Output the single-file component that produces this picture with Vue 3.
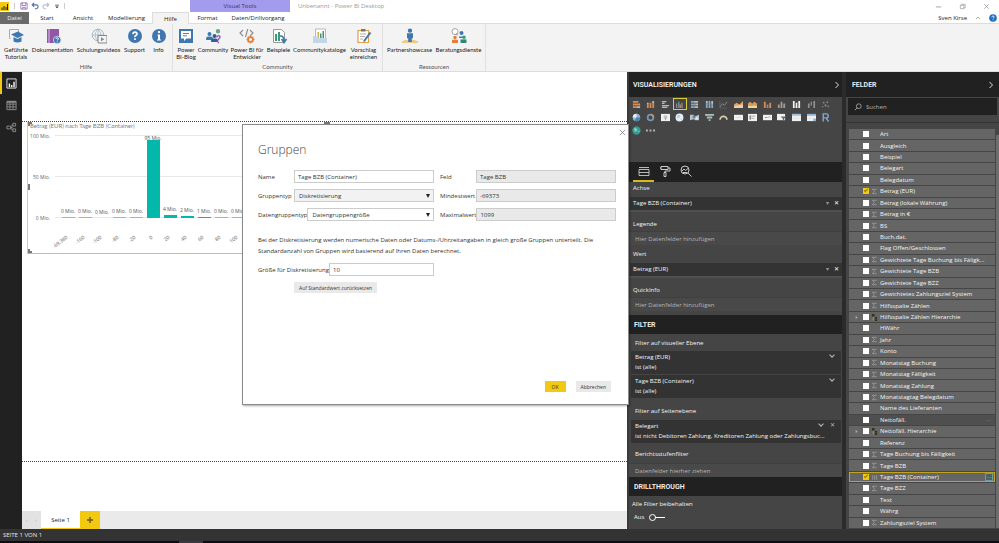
<script setup>
import { h, ref } from 'vue'

// Small multi-path icon: each part is [path data, fill, stroke, stroke width].
const Glyph = (props) =>
  h(
    'svg',
    { viewBox: `0 0 ${props.box} ${props.box}`, 'aria-hidden': 'true' },
    props.parts.map(([d, fill, stroke, width]) =>
      h('path', { d, fill: fill || 'none', stroke: stroke || 'none', 'stroke-width': width || 1 })
    )
  )
Glyph.props = ['parts', 'box']

const disc = (x, y, r) => `M${x - r} ${y}a${r} ${r} 0 1 0 ${2 * r} 0a${r} ${r} 0 1 0 ${-2 * r} 0z`
const person = (x, y, c) => [
  [disc(x, y, 2), c],
  [`M${x - 3.4} ${y + 6}v-1.6q0-2 2-2h2.8q2 0 2 2v1.6z`, c],
]

const blue = '#3f78b0'
const orange = '#e2803a'
const purple = '#9457a8'
const qMark = (x, y) => `M${x - 2} ${y - 1.4}q.1-2 2-2t2 1.8q0 1-1.200 1.700t-.8 1.500M${x} ${y + 2.8}v1.6`

const groups = [
  {
    name: 'Hilfe',
    cls: 'g-help',
    items: [
      {
        label: 'Geführte Tutorials',
        icon: [
          ['M2.5 10.5h-1v-9h9v3', '', '#aaa'],
          ['M3 6.500 10 3.500 16 7 9.500 10z', blue],
          ['M5.500 9v4.500q4 2 8 0V9l-4 2z', blue],
        ],
      },
      {
        label: 'Dokumentation',
        icon: [
          ['M2 1h12v14H2z', purple],
          ['M4 1v14', '', '#d8bde0', 1],
          [disc(12.2, 12, 3.8), blue, '#fff', 0.6],
          ['M11 11q0-1.300 1.200-1.300t1.200 1.100-1.200 1.500M12.200 13.400v1', '', '#fff', 0.9],
        ],
      },
      {
        label: 'Schulungsvideos',
        icon: [
          [disc(7, 7, 5.8), '', '#9fb0bd', 0.9],
          ['M1.200 7h11.600M7 1.200v11.600M7 1.200q-6 5.800 0 11.600M7 1.200q6 5.800 0 11.600', '', '#9fb0bd', 0.7],
          ['M7 7.500h9v7.500H7z', '#f3f3f3', '#888', 1],
          ['M10 9.200v4l3.400-2z', '#888'],
        ],
      },
      { label: 'Support', icon: [[disc(8, 8, 7), blue], [qMark(8, 7.5), '', '#fff', 1.7]] },
      { label: 'Info', icon: [[disc(8, 8, 7), blue], ['M7 3h2v2H7zM6.500 6.500H9v5h1v1H6v-1h1v-4h-.5z', '#fff']] },
    ],
  },
  {
    name: 'Community',
    cls: 'g-comm',
    items: [
      {
        label: 'Power BI-Blog',
        icon: [
          ['M1 1h14v14H1z', blue],
          ['M3 3h10v7.500H8.500L6 13v-2.500H3z', '#fff'],
          ['M5 5.500h6M5 7.800h4', '', blue, 0.9],
        ],
      },
      {
        label: 'Community',
        icon: [
          ...person(4.5, 6, blue),
          ...person(9.5, 8, '#2f5f93'),
          [disc(13, 3.2, 2.2), '#6aa58c'],
          ['M11.800 9.500q0-1.800 1.600-1.800T15 9.200q0 1-1.600 2v1.200M13.400 13.800v1.400', '', purple, 1.4],
        ],
      },
      {
        label: 'Power BI für Entwickler',
        icon: [
          ['M4 2 1 5l3 3M11 2l3 3-3 3M8.800 1 6.500 9', '', '#8b8b8b', 1.1],
          [disc(11.5, 11.5, 2.4), '', orange, 1.7],
          ['M11.500 7.600v1.500M11.500 14v1.500M7.600 11.500h1.500M14 11.500h1.500M8.700 8.700l1 1M13.300 13.300l1 1M14.300 8.700l-1 1M9.700 13.300l-1 1', '', orange, 1.3],
        ],
      },
      {
        label: 'Beispiele',
        icon: [
          ['M2.500 1.500h8l3 3v10h-11z', '#fff', '#9a9a9a', 1],
          ['M4 6h2v7H4z', '#3c9b74'],
          ['M7 4h2v9H7z', '#3c9b74'],
          ['M9 8q4-.5 4 5M10.500 11l2.500 3.500L15.500 11', '', blue, 1.6],
        ],
      },
      {
        label: 'Communitykataloge',
        icon: [
          ['M3.500 1h10v10h-10z', '#fff', '#a9a9a9', 0.8],
          ['M5.500 4h1.500v6H5.500z', '#c9b44a'],
          ['M8 5.500h1.500V10H8z', '#3c9b74'],
          ['M10.500 3H12v7h-1.500z', '#4b8f82'],
          ['M1 8q5 0 6 2h8v5H1z', '#c3d6e8'],
        ],
      },
      {
        label: 'Vorschlag einreichen',
        icon: [
          ['M2 2.500h10.500v12H2z', '#fff', '#dba24b', 1.2],
          ['M5 1h4.500v2.500H5z', '#777'],
          ['M4 6h6M4 8.500h5M4 11h3', '', '#999', 0.8],
          ['M14.500 4.500 8.500 12.500', '', blue, 2],
          ['M7.500 14l.3-2.200 1.700 1.200z', '#444'],
        ],
      },
    ],
  },
  {
    name: 'Ressourcen',
    cls: 'g-res',
    items: [
      {
        label: 'Partnershowcase',
        icon: [
          ['M0 13.500q3-2 8-2t8 2v1.500H0z', '#efc98a'],
          [disc(8, 2.6, 2.2), blue],
          ['M5 5.300h6v5H9.800V14H6.200v-3.700H5z', blue],
        ],
      },
      {
        label: 'Beratungsdienste',
        icon: [
          [disc(4, 3.6, 3), '#fff', '#999', 0.9],
          ['M4.500 6 6.500 8V5z', '#999'],
          [disc(10.5, 5, 2), blue],
          ['M8 10V8.500h5V10z', blue],
          [disc(4, 9.6, 1.8), orange],
          ['M1 15v-3.200h6V15z', orange],
          [disc(13, 9.2, 1.8), '#3c9b74'],
          ['M9.500 15v-3.600h6V15z', '#31867c'],
        ],
      },
    ],
  },
]

// Visual gallery glyphs, drawn in a 10 x 10 box.
const o = '#d98a4a'
const g = '#b9b9b9'
const b = '#7fa8c9'
const w = '#f1f1f1'
const visuals = [
  ['Gestapelte Balken', [['M1 1h5v2H1zM1 4h7v2H1zM1 7h4v2H1z', o], ['M6 1h1v2H6zM8 4h1v2H8zM5 7h4v2H5z', g]]],
  ['Gestapelte Säulen', [['M1 5h2v4H1zM4 3h2v6H4zM7 4h2v5H7z', o], ['M1 3h2v2H1zM7 1h2v3H7z', g]]],
  ['Gruppierte Balken', [['M1 1h5v1.500H1zM1 3h3v1.500H1zM1 5.500h8V7H1zM1 7.500h6V9H1z', g]]],
  ['Gruppierte Säulen', [['M1 4h1.500v5H1zM7 3h1.500v6H7z', '#8d8d8d'], ['M3.500 2H5v7H3.500z', '#6f96a8'], ['M5.200 5h1.300v4H5.200z', o]]],
  ['100 % Balken', [['M1 1h3v2H1zM1 4h5v2H1zM1 7h4v2H1z', b], ['M4 1h5v2H4zM6 4h3v2H6zM5 7h4v2H5z', g]]],
  ['100 % Säulen', [['M1 4h2v5H1zM4 2h2v7H4zM7 5h2v4H7z', b], ['M1 1h2v3H1zM4 1h2v1H4zM7 1h2v4H7z', g]]],
  ['Linie', [['M1 8 4 4l2 2 3-4', '', '#8b8b8b', 1], ['M1 1v8h8', '', '#6d6d6d', 0.7]]],
  ['Fläche', [['M0 9V5l3-2 3 2 4-4v8z', '#e6a262'], ['M0 9V7l4-1 6-1v4z', '#e9cfae']]],
  ['Gestapelte Fläche', [['M0 9V4l2-2 3 2 2-2 3 2v5z', '#d79a58'], ['M0 9V6l4 1 3-1 3 1v2z', '#efd7a5']]],
  ['Linie und Säule', [['M1 2h2v7H1zM7 3h2v6H7z', o], ['M4 5h2v4H4z', '#8a8a8a']]],
  ['Linie und gruppierte Säule', [['M1 5h2v4H1zM4 2h2v7H4zM7 4h2v5H7z', '#a29a93']]],
  ['Menüband', [['M1 1h2v8H1zM4 3h2v6H4zM7 1h2v8H7z', w], ['M3 3h1v3H3zM6 4h1v3H6z', '#8b6f5a']]],
  ['Wasserfall', [['M1 4h2v5H1zM4 2h1.500v4H4zM7 1h2v8H7z', '#8d8d8d']]],
  ['Punktdiagramm', [[disc(3, 3, 1) + disc(7, 2.5, 1) + disc(5, 6, 1.2) + disc(8, 7, 1) + disc(2, 7.5, 0.8), '#858585']]],
  ['Kreis', [[disc(5, 5, 4.2), '#8fb6d6'], ['M5 5V.8A4.200 4.200 0 0 0 .8 5z', w], ['M5 5h4.200A4.200 4.200 0 0 1 3 8.700z', '#4f7fae']]],
  ['Ring', [[disc(5, 5, 3.2), '', '#7195bb', 2], ['M5 1.800A3.200 3.200 0 0 1 8.200 5', '', '#c3915f', 2]]],
  ['Treemap', [['M0 1h10v8H0z', w], ['M3 3.500h4M3 5.500h4M5 5.500V8', '', '#777', 0.7]]],
  ['Karte', [[disc(5, 5, 4.4), '#e4eff8'], ['M2.500 2.500 5 2l1 2-2 2-2-1zM6 6l2 0-1 2z', '#b9d2e6']]],
  ['Flächenkartogramm', [['M0 2h4l1 2 5-2v6H6L4 7 0 8z', '#b5c2cf'], ['M3 3h3v3H3z', '#5c82a8'], [disc(7.5, 6, 1.5), '#e2e2e2']]],
  ['Trichter', [['M0 1h10v2H0zM2 4h6v2H2zM4 7h2v2H4z', '#a9c0b4']]],
  ['Messgerät', [['M1.200 7.500a3.800 3.800 0 0 1 7.600 0', '', '#d6ccb0', 1.8]]],
  ['Karte (Zahl)', [['M0 2h10v6H0z', w], ['M2 5h6', '', '#d8d8d8', 0.8]]],
  ['Mehrzeilige Karte', [['M0 1h10v8H0z', w], ['M2 3h1v4H2zM4 3.500h4M4 6h3', '#888', '#888', 0.7]]],
  ['KPI', [['M0 2h10v6H0z', w], ['M2 5h3M6 5l1-1 1 1', '', '#b07070', 0.9]]],
  ['Datenschnitt', [['M0 1h9v7H0z', w], ['M4 4h6L8 6.500V9.500L6.500 8V6.500z', '#5b6b7a']]],
  ['Tabelle', [['M0 1h10v8H0z', w], ['M0 1h10v2H0z', '#9cbcd8'], ['M3.500 3v6M6.500 3v6M0 6h10', '', '#dedede', 0.5]]],
  ['Matrix', [['M0 1h10v8H0z', w], ['M0 1h10v2H0zM7 6h3v3H7z', '#8fb3d3'], ['M3.500 3v6M0 6h10', '', '#dedede', 0.5]]],
  ['R-Skript', [['M2.500 9.500V1h3.500q2 0 2 2.200t-2 2.200H2.500M5.500 5.400 8.500 9.500', '', '#7fa5d4', 1.6]]],
  ['ArcGIS', [[disc(5, 5, 4.6), '#2f9d92'], ['M2 3 4 2l2 2-1 2-2 0zM6 6l2-1 0 2z', '#83cfc6']]],
]

const bars = [
  ['-69.380', '0 Mio.', 1],
  ['-160', '0 Mio.', 1],
  ['-100', '0 Mio.', 0],
  ['-80', '0 Mio.', 1],
  ['-20', '0 Mio.', 1],
  ['0', '95 Mio.', 78],
  ['20', '4 Mio.', 3],
  ['40', '2 Mio.', 2],
  ['60', '1 Mio.', 1],
  ['80', '0 Mio.', 1],
  ['100', '0 Mio.', 1],
]

const s = 'sum'
const fields = ref(
  [
    ['Art'], ['Ausgleich'], ['Beispiel'], ['Belegart'], ['Belegdatum'],
    ['Betrag (EUR)', s, true],
    ['Betrag (lokale Währung)', s], ['Betrag in €', s], ['BS', s],
    ['Buch.dat.'], ['Flag Offen/Geschlossen'],
    ['Gewichtete Tage Buchung bis Fäligk...', s],
    ['Gewichtete Tage BZB', s], ['Gewichtete Tage BZZ', s],
    ['Gewichtetes Zahlungsziel System', s],
    ['Hilfsspalte Zählen', s], ['Hilfsspalte Zählen Hierarchie', 'tree'],
    ['HWähr'], ['Jahr', s], ['Konto', s],
    ['Monatstag Buchung', s], ['Monatstag Fälligkeit', s],
    ['Monatstag Zahlung', s], ['Monatstagtag Belegdatum', s],
    ['Name des Lieferanten'], ['Nettofäll.', 'hover'],
    ['Nettofäll. Hierarchie', 'tree'], ['Referenz'],
    ['Tage Buchung bis Fälligkeit', s], ['Tage BZB', s],
    ['Tage BZB (Container)', 'bin', true], ['Tage BZZ', s],
    ['Text'], ['Währg'], ['Zahlungsziel System', s],
  ].map(([name, kind = '', on = false]) => ({ name, kind, on }))
)

const name = ref('Tage BZB (Container)')
const size = ref('10')
</script>

<template>
  <div class="app">
    <header>
      <div class="titlebar">
        <div class="quick">
          <svg class="logo" viewBox="0 0 9 9" aria-hidden="true"><path d="M0 0h9v9H0z" fill="#f2c811" /><path d="M1.500 5.500h1V8h-1zM3.500 4h1v4h-1zM5.500 5h1v3h-1zM7 2h1v6H7z" fill="#222" /></svg>
          <i class="bar"></i>
          <button aria-label="Speichern"><svg viewBox="0 0 9 9"><path d="M1 1h7v7H1zM2.500 1v3h4V1M3 8V6h3v2" fill="none" stroke="#8a68a8" stroke-width=".9" /></svg></button>
          <button aria-label="Rückgängig"><svg viewBox="0 0 9 9"><path d="M3.500 1 1.300 3.200l2.200 2.200M1.500 3.200H6q2 0 2 2T6 7.500H4.500" fill="none" stroke="#4f6fa8" stroke-width="1.200" /></svg></button>
          <button aria-label="Wiederholen"><svg viewBox="0 0 9 9"><path d="M5.500 1l2.200 2.200-2.200 2.200M7.500 3.200H3q-2 0-2 2t2 2.300h1.500" fill="none" stroke="#b3bfd6" stroke-width="1.200" /></svg></button>
          <button aria-label="Anpassen"><svg viewBox="0 0 9 9"><path d="M2.500 3h4v1h-4zM2.500 5h4l-2 2z" fill="#333" /></svg></button>
          <i class="bar tail"></i>
        </div>
        <div class="context">Visual Tools</div>
        <div class="doc">Unbenannt - Power BI Desktop</div>
        <div class="window">
          <button aria-label="Minimieren"><svg viewBox="0 0 8 8"><path d="M1 4.500h6" fill="none" stroke="#999" /></svg></button>
          <button aria-label="Verkleinern"><svg viewBox="0 0 8 8"><path d="M1.500 2.500h4v4h-4zM3 2.500v-1h4v4H5.500" fill="none" stroke="#999" stroke-width=".8" /></svg></button>
          <button aria-label="Schließen"><svg viewBox="0 0 8 8"><path d="M1.500 1.500l5 5M6.500 1.500l-5 5" fill="none" stroke="#888" stroke-width=".8" /></svg></button>
        </div>
      </div>
      <nav class="tabs">
        <button class="file">Datei</button>
        <button>Start</button>
        <button>Ansicht</button>
        <button>Modellierung</button>
        <button class="active">Hilfe</button>
        <button>Format</button>
        <button>Daten/Drillvorgang</button>
        <div class="user">
          <span>Sven Kirse</span>
          <svg viewBox="0 0 8 8"><path d="M2 5l2-2 2 2" fill="none" stroke="#999" stroke-width=".8" /></svg>
          <svg viewBox="0 0 8 8"><circle cx="4" cy="4" r="3.800" fill="#1f6fc0" /><path d="M2.900 3.200q0-1.300 1.100-1.300t1.100 1-1.100 1.600M4 5.300v.9" fill="none" stroke="#fff" stroke-width=".8" /></svg>
        </div>
      </nav>
      <div class="ribbon">
        <section v-for="grp in groups" :key="grp.name" class="group">
          <div class="items" :class="grp.cls">
            <button v-for="it in grp.items" :key="it.label">
              <Glyph :parts="it.icon" :box="16" class="big" />
              <span>{{ it.label }}</span>
            </button>
          </div>
          <h2>{{ grp.name }}</h2>
        </section>
      </div>
    </header>

    <main>
      <nav class="views">
        <button class="on" aria-label="Bericht"><svg viewBox="0 0 12 12"><path d="M1 1h10v10H1z" fill="none" stroke="#e8e8e8" /><path d="M3 6h1.500v4H3zM5.500 7.500H7V10H5.500zM8 4h1.500v6H8z" fill="#fff" /></svg></button>
        <button aria-label="Daten"><svg viewBox="0 0 12 12"><path d="M1 1.500h10v9H1zM1 4.500h10M1 7.500h10M4.300 2v9M7.700 2v9" fill="none" stroke="#8c8c8c" /><path d="M1 1h10v2H1z" fill="#8c8c8c" /></svg></button>
        <button aria-label="Beziehungen"><svg viewBox="0 0 12 12"><path d="M1 4.500h4v3H1zM7.500 1.500h3v3h-3zM7.500 7.500h3v3h-3zM5 6h1.500M6.500 3v6M6.500 3h1M6.500 9h1" fill="none" stroke="#8c8c8c" /></svg></button>
      </nav>

      <div class="center">
        <div class="canvas">
          <div class="page">
            <figure>
              <figcaption>Betrag (EUR) nach Tage BZB (Container)</figcaption>
              <svg class="chart" viewBox="0 0 600 122" preserveAspectRatio="xMinYMin slice">
                <g stroke="#e9e9e9" stroke-width="1"><path d="M27 5.500H595M27 46.500H595M27 87.500H595" /></g>
                <g class="axis" text-anchor="end">
                  <text x="22" y="8">100 Mio.</text>
                  <text x="22" y="49">50 Mio.</text>
                  <text x="22" y="90">0 Mio.</text>
                </g>
                <g v-for="(bar, i) in bars" :key="bar[0]">
                  <rect :x="34 + i * 17" :y="88 - bar[2]" width="13" :height="bar[2]" fill="#01b8aa" :opacity="bar[1] === '0 Mio.' ? 0.55 : 1" />
                  <text class="val" :x="40 + i * 17" :y="bar[2] > 9 ? 88 - bar[2] : 84 - bar[2]" text-anchor="middle">{{ bar[1] }}</text>
                  <text class="axis" :transform="`translate(${40 + i * 17} 108) rotate(-38)`" text-anchor="end">{{ bar[0] }}</text>
                </g>
              </svg>
              <i class="handle tl"></i><i class="handle ml"></i><i class="handle bl"></i><i class="handle tc"></i>
            </figure>
          </div>
        </div>
        <footer class="pages">
          <div class="arrows"><button aria-label="Vorherige Seite">‹</button><button aria-label="Nächste Seite">›</button></div>
          <button class="sheet">Seite 1</button>
          <button class="add" aria-label="Neue Seite"><svg viewBox="0 0 8 8"><path d="M4 1v6M1 4h6" stroke="#6b5a10" stroke-width="1.400" /></svg></button>
        </footer>
      </div>

      <aside class="viz">
        <h1>VISUALISIERUNGEN <svg viewBox="0 0 8 8"><path d="M2.500 1 5.500 4l-3 3" fill="none" stroke="#ddd" /></svg></h1>
        <div class="gallery">
          <button v-for="(v, i) in visuals" :key="v[0]" :aria-label="v[0]" :class="{ picked: i === 3 }">
            <Glyph :parts="v[1]" :box="10" class="tiny" />
          </button>
          <button class="more" aria-label="Weitere"><svg class="tiny" viewBox="0 0 10 10"><path d="M0 4h2v2H0zM4 4h2v2H4zM8 4h2v2H8z" fill="#bbb" /></svg></button>
        </div>
        <div class="wells-tabs">
          <button class="on" aria-label="Felder"><svg viewBox="0 0 12 12"><path d="M1 2.500h10M1 4.500h10v6H1zM1 7.500h10" fill="none" stroke="#ddd" stroke-width=".8" /></svg></button>
          <button aria-label="Format"><svg viewBox="0 0 12 12"><path d="M2 1.500h7v3H2zM9 3h2v3H6v1.500M5 7.500h2v4H5zM2 3H1" fill="none" stroke="#ddd" stroke-width=".9" /></svg></button>
          <button aria-label="Analyse"><svg viewBox="0 0 12 12"><circle cx="5" cy="5" r="4" fill="none" stroke="#ddd" stroke-width=".9" /><path d="M8 8l3.500 3.500M2 6l2-2 1.500 1.500L8 3.500M3 7.500h4" fill="none" stroke="#ddd" stroke-width=".9" /></svg></button>
        </div>
        <div class="wells">
          <h3>Achse</h3>
          <div class="well">Tage BZB (Container)<span class="acts"><button aria-label="Menü">▾</button><button class="x" aria-label="Entfernen">✕</button></span></div>
          <h3 class="after">Legende</h3>
          <p class="drop">Hier Datenfelder hinzufügen</p>
          <h3 class="mid">Wert</h3>
          <div class="well">Betrag (EUR)<span class="acts"><button aria-label="Menü">▾</button><button class="x" aria-label="Entfernen">✕</button></span></div>
          <h3 class="after">QuickInfo</h3>
          <p class="drop">Hier Datenfelder hinzufügen</p>
        </div>
        <h2>FILTER</h2>
        <div class="filters">
          <h3>Filter auf visueller Ebene</h3>
          <div class="card"><b>Betrag (EUR)</b><span>ist (alle)</span><i class="chev"></i></div>
          <div class="card"><b>Tage BZB (Container)</b><span>ist (alle)</span><i class="chev"></i></div>
          <h3 class="next">Filter auf Seitenebene</h3>
          <div class="card"><b>Belegart</b><span>ist nicht Debitoren Zahlung, Kreditoren Zahlung oder Zahlungsbuc...</span><i class="chev two"></i><button class="cut" aria-label="Filter entfernen">✕</button></div>
          <h3 class="report">Berichtsstufenfilter</h3>
          <p class="drop">Datenfelder hierher ziehen</p>
        </div>
        <h2>DRILLTHROUGH</h2>
        <div class="drill">
          <span>Alle Filter beibehalten</span>
          <label>Aus <input type="checkbox" role="switch" /></label>
        </div>
      </aside>

      <aside class="fields">
        <h1>FELDER <svg viewBox="0 0 8 8"><path d="M2.500 1 5.500 4l-3 3" fill="none" stroke="#ddd" /></svg></h1>
        <div class="search">
          <svg viewBox="0 0 10 10"><circle cx="6" cy="4" r="3" fill="none" stroke="#bbb" stroke-width=".9" /><path d="M4 6 1 9" stroke="#bbb" /></svg>
          <input type="text" placeholder="Suchen" aria-label="Suchen" />
        </div>
        <div class="listwrap">
          <ul>
            <li v-for="f in fields" :key="f.name" :class="f.kind">
              <i class="twist"><svg v-if="f.kind === 'tree'" viewBox="0 0 6 6"><path d="M2 1l2.500 2L2 5z" fill="#aaa" /></svg></i>
              <label>
                <input v-model="f.on" type="checkbox" />
                <svg class="kind" viewBox="0 0 8 8">
                  <path v-if="f.kind === 'sum'" d="M6.500 1.500h-5L4 4 1.500 6.500h5" fill="none" stroke="#a0a0a0" stroke-width=".9" />
                  <path v-else-if="f.kind === 'bin'" d="M1.500 1.500h1v5h-1zM3.800 1.500h1v5h-1zM6 1.500h1v5H6z" fill="#9a9a9a" />
                  <g v-else-if="f.kind === 'tree'"><path d="M1 0h3v3H1zM4 3.500h3v2H4zM4 6h3v2H4z" fill="#35301c" /><path d="M2.500 3v4H4M2.500 4.500H4" fill="none" stroke="#c0a860" stroke-width=".7" /></g>
                </svg>
                <span>{{ f.name }}</span>
              </label>
              <em v-if="f.kind === 'hover'">···</em>
              <button v-if="f.kind === 'bin'" class="dots" aria-label="Optionen">···</button>
            </li>
          </ul>
          <div class="thumb"></div>
        </div>
      </aside>
    </main>

    <div class="status">SEITE 1 VON 1</div>
    <div class="taskbar"><i></i></div>

    <div class="dialog" role="dialog" aria-labelledby="dlg">
      <button class="close" aria-label="Schließen"><svg viewBox="0 0 8 8"><path d="M1 1l6 6M7 1 1 7" fill="none" stroke="#777" stroke-width=".8" /></svg></button>
      <h1 id="dlg">Gruppen</h1>
      <div class="form">
        <div class="row"><label for="f-name">Name</label><input id="f-name" v-model="name" type="text" /></div>
        <div class="row"><label for="f-field">Feld</label><input id="f-field" type="text" value="Tage BZB" readonly /></div>
        <div class="row"><label for="f-type">Gruppentyp</label><div class="sel grey"><select id="f-type"><option>Diskretisierung</option></select></div></div>
        <div class="row"><label for="f-min">Mindestwert</label><input id="f-min" type="text" value="-69373" readonly /></div>
        <div class="row"><label for="f-bin">Datengruppentyp</label><div class="sel"><select id="f-bin"><option>Datengruppengröße</option></select></div></div>
        <div class="row"><label for="f-max">Maximalwert</label><input id="f-max" type="text" value="1099" readonly /></div>
      </div>
      <p>Bei der Diskretisierung werden numerische Daten oder Datums-/Uhrzeitangaben in gleich große Gruppen unterteilt. Die Standardanzahl von Gruppen wird basierend auf Ihren Daten berechnet.</p>
      <div class="form">
        <div class="row"><label for="f-size">Größe für Diskretisierung</label><input id="f-size" v-model="size" type="text" /></div>
      </div>
      <button class="btn reset">Auf Standardwert zurücksetzen</button>
      <div class="foot"><button class="btn ok">OK</button><button class="btn">Abbrechen</button></div>
    </div>
  </div>
</template>

<style>
body { margin: 0; }
</style>

<style scoped>
.app {
  min-height: 100vh;
  display: flex;
  flex-direction: column;
  position: relative;
  font: 6px/8px "Open Sans", "Noto Sans", sans-serif;
  color: #222;
  background: #fff;
  overflow: hidden;
}
.app *, .app *::after { box-sizing: border-box; }
button, input, select { font: inherit; color: inherit; border: 0; padding: 0; margin: 0; background: none; border-radius: 0; }
h1, h2, h3, p, ul, figure { margin: 0; padding: 0; font: inherit; }
svg { display: block; flex: none; }

.titlebar { display: flex; height: 12px; align-items: center; }
.quick { display: flex; width: 190px; align-items: center; gap: 3px; }
.quick svg { width: 8px; height: 8px; }
.quick .logo { width: 9px; height: 9px; }
.bar { width: 1px; height: 6px; background: #ccc; margin: 0 2px; }
.bar.tail { margin: 0; }
.context { width: 100px; height: 12px; line-height: 12px; text-align: center; background: #a39bee; color: #3b3566; }
.doc { padding-left: 8px; color: #999; }
.window { margin-left: auto; display: flex; gap: 17px; padding-right: 9px; }
.window svg { width: 7px; height: 7px; }

.tabs { display: grid; grid-template-columns: 29px 36px 36px 51px 37px 37px 64px 1fr; height: 12px; border-bottom: 1px solid #ddd; }
.tabs button { line-height: 11px; }
.tabs .file { background: #6a6a6a; color: #eee; }
.tabs .active { background: #f3f3f3; border: 1px solid #ddd; border-bottom: 0; height: 12px; line-height: 10px; }
.user { display: flex; justify-content: flex-end; align-items: center; gap: 7px; padding-right: 2px; }
.user svg { width: 8px; height: 8px; }

.ribbon { display: flex; height: 48px; background: #f3f3f3; border-bottom: 1px solid #ddd; font-family: Lato, sans-serif; }
.group { display: flex; flex-direction: column; border-right: 1px solid #e0e0e0; }
.items { display: grid; padding: 4px 2px 0; }
.items button { display: flex; flex-direction: column; align-items: center; line-height: 7px; text-align: center; }
.items span { margin-top: 2px; }
.big { width: 16px; height: 16px; }
.g-help { grid-template-columns: 28px 45px 47px 25px 23px; }
.g-comm { grid-template-columns: 22px 32px 36px 27px 55px 33px; }
.g-res { grid-template-columns: 49px 49px; }
.group h2 { margin-top: auto; text-align: center; color: #555; }

main { flex: 1; display: flex; min-height: 0; }
.views { width: 22px; background: #212121; display: flex; flex-direction: column; }
.views button { height: 22px; display: grid; place-items: center; border-left: 2px solid #212121; }
.views .on { border-color: #f2c811; }
.views svg { width: 11px; height: 11px; margin-right: 2px; }

.center { flex: 1; min-width: 0; display: flex; flex-direction: column; }
.canvas { flex: 1; padding-top: 49px; }
.page { height: 341px; border-top: 1px dotted #444; border-bottom: 1px dotted #444; padding-left: 5px; }
figure { position: relative; height: 132px; border-left: 1px solid #ccc; border-bottom: 1px solid #bbb; overflow: hidden; }
figcaption { padding-left: 2px; line-height: 8px; color: #808080; font-family: Lato, sans-serif; }
.chart { width: 600px; height: 122px; }
.axis, .val { font-size: 5px; fill: #666; }
.val { fill: #555; }
.handle { position: absolute; background: #777; }
.tl { left: 0; top: 0; width: 4px; height: 4px; background: none; border-left: 2px solid #777; border-top: 2px solid #777; }
.ml { left: 0; top: 62px; width: 2px; height: 6px; }
.bl { left: 0; bottom: 0; width: 4px; height: 4px; background: none; border-left: 2px solid #777; border-bottom: 2px solid #777; }
.tc { left: 50%; top: 0; width: 6px; height: 2px; margin-left: -4px; }

.pages { height: 18px; display: flex; background: #eaeaea; }
.arrows { width: 19px; display: flex; justify-content: space-around; color: #aaa; background: #e2e2e2; }
.sheet { width: 39px; background: #fff; border-bottom: 1px solid #f2c811; }
.add { width: 20px; background: #f2c811; display: grid; place-items: center; }
.add svg { width: 8px; height: 8px; }

aside { color: #f4f4f4; background: #454545; display: flex; flex-direction: column; }
aside h1 { height: 25px; background: #212121; display: flex; align-items: center; justify-content: space-between; font: 600 7px/10px Roboto, sans-serif; padding: 0 1px 0 4px; color: #f2f2f2; }
aside h1 svg { width: 8px; height: 8px; }
.viz { width: 219px; border-left: 2px solid #3a3a3a; border-right: 4px solid #2b2b2b; }
.gallery { height: 65px; display: grid; grid-template-columns: repeat(14, 1fr); grid-auto-rows: 12px; row-gap: 1px; padding: 1px 9px 0 0; align-content: start; }
.gallery button { display: grid; place-items: center; }
.gallery .picked { outline: 1px solid #d9cf3a; outline-offset: -1px; }
.tiny { width: 9px; height: 9px; }
.wells-tabs { height: 20px; background: #212121; display: flex; padding-left: 4px; }
.wells-tabs button { width: 21px; display: grid; place-items: center; border-bottom: 2px solid #212121; }
.wells-tabs .on { border-color: #d9b914; }
.wells-tabs svg { width: 12px; height: 12px; }
.wells { height: 133px; }
.viz h3 { padding-left: 4px; }
.wells h3 { padding-top: 2px; height: 15px; }
.well { height: 13px; line-height: 13px; background: #333; margin-left: 1px; padding-left: 3px; display: flex; justify-content: space-between; }
.acts { display: flex; gap: 5px; padding-right: 3px; color: #999; }
.acts .x { color: #fff; }
.wells .after { padding-top: 8px; height: 21px; border-top: 2px solid #4f4f4f; }
.wells .mid { padding-top: 5px; height: 18px; }
.drop { height: 14px; line-height: 14px; padding-left: 6px; color: #b5b5b5; background: #494949; border-top: 1px solid #3f3f3f; }
.viz h2 { height: 19px; line-height: 20px; background: #212121; font-family: Roboto, sans-serif; font-weight: 600; font-size: 7px; padding-left: 5px; color: #f2f2f2; }
.filters h3 { padding: 5px 0 0 6px; height: 17px; }
.card { position: relative; height: 23px; background: #333; margin: 0 1px 1px 2px; padding: 2px 0 0 4px; display: flex; flex-direction: column; gap: 2px; border-radius: 1px; white-space: nowrap; }
.card b { font-weight: inherit; }
.chev { position: absolute; right: 7px; top: 2px; width: 4px; height: 4px; border: solid #bbb; border-width: 0 1px 1px 0; transform: rotate(45deg); }
.chev.two { right: 18px; }
.cut { position: absolute; right: 6px; top: 1px; color: #bbb; }
.filters .next { padding-top: 8px; height: 21px; }
.filters .report { padding-top: 6px; height: 19px; }
.filters .drop { height: 14px; }
.drill { flex: 1; padding: 4px 0 0 3px; display: flex; flex-direction: column; gap: 5px; }
.drill label { display: flex; align-items: center; gap: 5px; padding-left: 2px; }
.drill input { appearance: none; width: 16px; height: 7px; position: relative; background: linear-gradient(#fff, #fff) 100% 50% / 10px 1px no-repeat; }
.drill input::before { content: ""; position: absolute; left: 0; top: 0; width: 7px; height: 7px; border: 1px solid #fff; border-radius: 50%; box-sizing: border-box; }

.fields { width: 153px; }
.fields h1 { padding: 0 4px 0 6px; }
.search { height: 17px; margin: 1px 2px 0 2px; background: #212121; display: flex; align-items: center; gap: 4px; padding-left: 6px; }
.search svg { width: 8px; height: 8px; }
.search input { flex: 1; min-width: 0; font-size: 6px; }
.search input::placeholder { color: #b8b8b8; opacity: 1; }
.listwrap { flex: 1; display: flex; margin-top: 7px; padding: 6px 0 1px 3px; border-top: 1px solid #333; }
.fields ul { flex: 1; list-style: none; display: grid; grid-auto-rows: 1fr; row-gap: 1px; background: #454545; }
.fields li { display: flex; align-items: center; background: #656565; min-height: 0; padding-right: 2px; }
.fields li.hover { background: #4f4f4f; }
.fields li.bin { outline: 1px solid #c0a51c; outline-offset: -1px; }
.fields label { flex: 1; display: flex; align-items: center; height: 8px; white-space: nowrap; }
.twist { width: 14px; padding-left: 5px; }
.twist svg { width: 5px; height: 5px; }
.fields input[type="checkbox"] { appearance: none; width: 6px; height: 6px; background: #fff; }
.fields input[type="checkbox"]:checked { background: #f2c811; }
.fields input[type="checkbox"]:checked::after { content: ""; display: block; width: 2px; height: 4px; margin-left: 2px; border: solid #8a7300; border-width: 0 1px 1px 0; transform: rotate(45deg); }
.kind { width: 7px; height: 7px; margin: 0 2px; }
em { color: #999; font-style: normal; padding-right: 2px; }
.dots { width: 8px; height: 8px; line-height: 6px; border: 1px solid #6f9aa3; background: #4c6068; color: #9cc; }
.thumb { width: 3px; margin: 6px 0 0 1px; background: #6d6d6d; }

.status { height: 12px; line-height: 12px; background: #333; color: #e8e8e8; padding-left: 3px; }
.taskbar { height: 2px; background: #0c0c14; padding-left: 179px; }
.taskbar i { display: block; width: 24px; height: 2px; background: #3a3a44; }

.dialog { position: absolute; left: 242px; top: 124px; width: 387px; min-height: 281px; display: flex; flex-direction: column; background: #fff; border: 1px solid #8a8a8a; box-shadow: 1px 1px 2px rgba(0, 0, 0, .35); padding: 16px 12px 12px 15px; color: #333; }
.close { position: absolute; right: 2px; top: 4px; }
.close svg { width: 7px; height: 7px; }
.dialog h1 { font-size: 12px; line-height: 17px; font-weight: 300; color: #444; margin-bottom: 12px; }
.form { display: grid; grid-template-columns: 1fr 1fr; gap: 6px; }
.row { display: flex; align-items: center; height: 13px; white-space: nowrap; }
.row > label { min-width: 36px; flex: none; }
.row > input, .sel { flex: 1; min-width: 0; height: 13px; border: 1px solid #ccc; padding: 0 3px; background: #fff; }
.row > input[readonly] { background: #e9e9e9; }
.sel { position: relative; padding: 0; }
.sel.grey { background: #f2f2f2; }
.sel select { appearance: none; width: 100%; height: 11px; padding-left: 4px; }
.sel::after { content: ""; position: absolute; right: 3px; top: 4px; border: 2px solid transparent; border-top: 4px solid #222; border-bottom: 0; }
.dialog p { line-height: 11px; margin: 14px 0 6px; }
.btn { height: 11px; background: #e9e9e9; padding: 0 5px; font-size: 5px; }
.reset { align-self: flex-start; margin: 6px 0 0 36px; }
.foot { margin-top: auto; display: flex; justify-content: flex-end; gap: 10px; padding-right: 5px; }
.btn.ok { background: #f2c811; width: 21px; }
</style>
